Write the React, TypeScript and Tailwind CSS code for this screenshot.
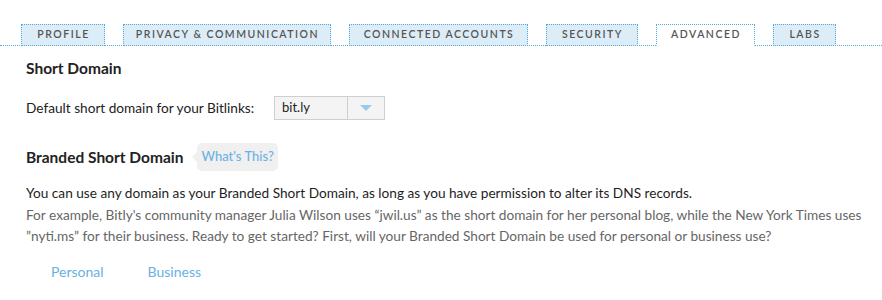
const tabs = [
  { label: "PROFILE", w: "w-[84px]" },
  { label: "PRIVACY & COMMUNICATION", w: "w-[208px]" },
  { label: "CONNECTED ACCOUNTS", w: "w-[179px]" },
  { label: "SECURITY", w: "w-[92px]" },
  { label: "ADVANCED", w: "w-[99px]", active: true },
  { label: "LABS", w: "w-[63px]" },
];

export default function App() {
  return (
    <div className="w-[882px] h-[300px] bg-white overflow-hidden" style={{ fontFamily: "Lato, 'Open Sans', sans-serif" }}>
      <div className="pt-[24px] border-b border-dotted border-[#4fabe0] flex gap-[18px] pl-[21px]">
        {tabs.map((t) => (
          <div
            key={t.label}
            className={
              t.w +
              " h-[22px] -mb-px border border-dotted border-[#4fabe0] flex items-center justify-center text-[10.5px] font-semibold tracking-[1.5px] text-[#555] " +
              (t.active ? "bg-white border-b-white" : "bg-[#dcedf8]")
            }
          >
            <span className="pl-[1px]">{t.label}</span>
          </div>
        ))}
      </div>

      <div className="pl-[26px]">
        <h2 className="mt-[12px] text-[15.5px] leading-[20px] font-bold text-[#222]">Short Domain</h2>

        <div className="mt-[18px] flex items-center">
          <span className="text-[13.65px] text-[#222] w-[248px]">Default short domain for your Bitlinks:</span>
          <div className="w-[111px] h-[24px] border border-[#cfcfcf] bg-[#f4f4f4] flex">
            <div className="flex-1 flex items-center pl-[7px] text-[13px] text-[#222]">bit.ly</div>
            <div className="w-[37px] border-l border-[#cfcfcf] flex items-center justify-center">
              <svg width="12" height="6" viewBox="0 0 12 6">
                <path d="M0 0 L12 0 L6 6 Z" fill="#9ccbea" />
              </svg>
            </div>
          </div>
        </div>

        <div className="mt-[23px] flex items-center">
          <h2 className="text-[15.5px] leading-[20px] font-bold text-[#222]">Branded Short Domain</h2>
          <div className="ml-[9px] relative flex items-center">
            <div className="w-0 h-0 border-y-[5px] border-y-transparent border-r-[5px] border-r-[#f0f0f0]" />
            <div className="h-[28px] px-[4px] rounded-[5px] bg-[#f0f0f0] flex items-center text-[13px] font-medium text-[#6bb3e4]">
              What's This?
            </div>
          </div>
        </div>

        <div className="mt-[12px] text-[13.65px] leading-[21.5px]">
          <p className="text-[#1e1e1e]">
            You can use any domain as your Branded Short Domain, as long as you have permission to alter its DNS records.
          </p>
          <p className="text-[#666]">
            For example, Bitly's community manager Julia Wilson uses “jwil.us” as the short domain for her personal blog, while the New York Times uses
            <br />
            ”nyti.ms” for their business. Ready to get started? First, will your Branded Short Domain be used for personal or business use?
          </p>
        </div>

        <div className="mt-[14px] pl-[25px] flex gap-[44px] text-[14px] leading-[20px] text-[#68b1e3]">
          <span>Personal</span>
          <span>Business</span>
        </div>
      </div>
    </div>
  );
}
